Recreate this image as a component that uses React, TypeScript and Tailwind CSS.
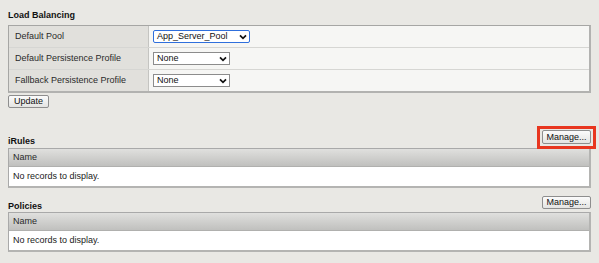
import React from 'react';

const font = { fontFamily: '"Liberation Sans", Arial, Helvetica, sans-serif' };

function Chevron() {
  return (
    <svg width="8" height="6" viewBox="0 0 8 6" className="shrink-0">
      <path d="M1 1.3 L4 4.3 L7 1.3" fill="none" stroke="#111" strokeWidth="1.7" />
    </svg>
  );
}

function FakeSelect({ value, width, focused }: { value: string; width: string; focused?: boolean }) {
  return (
    <div
      className={`flex items-center justify-between h-[13px] pl-[3px] pr-[2px] bg-white text-[9px] leading-none text-[#111] ${width} ${
        focused ? 'border-[1.5px] border-[#2f6fdc] rounded-[2px]' : 'border border-[#8c8c8c]'
      }`}
    >
      <span>{value}</span>
      <Chevron />
    </div>
  );
}

function Btn({ label, w, h }: { label: string; w: string; h: string }) {
  return (
    <button
      className={`${h} ${w} flex items-center justify-center text-[9px] leading-none text-[#111] border border-[#8e8e8e] rounded-[2px] bg-gradient-to-b from-[#fbfbfb] to-[#e4e4e2]`}
    >
      {label}
    </button>
  );
}

function PropRow({ label, children, last }: { label: string; children: React.ReactNode; last?: boolean }) {
  return (
    <div className={`flex ${last ? 'h-[21px]' : 'h-[22px] border-b border-[#d6d6d3]'}`}>
      <div className="w-[140px] bg-[#e1e0dc] border-r border-[#c4c4c1] flex items-center pl-[6px] text-[#2a2a2a]">
        {label}
      </div>
      <div className="flex-1 bg-[#f6f6f4] flex items-center pl-[4px]">{children}</div>
    </div>
  );
}

function EmptyList() {
  return (
    <div className="border border-[#a9a9a9] border-b-2 border-r-2 border-b-[#b4b4b2] border-r-[#b4b4b2]">
      <div className="h-[18px] flex items-center pl-[4px] bg-gradient-to-b from-[#e0e0de] to-[#c0c0be] border-b border-[#b0b0ae] text-[#2a2a2a]">
        Name
      </div>
      <div className="h-[19px] flex items-center pl-[4px] bg-white text-[#1a1a1a]">No records to display.</div>
    </div>
  );
}

export default function App() {
  return (
    <div className="w-[599px] h-[263px] bg-[#e9e8e4] pt-[10px] pl-[8px] pr-[8px] text-[9px] overflow-hidden" style={font}>
      <div className="h-[15px] leading-[11px] font-bold text-[#111]">Load Balancing</div>
      <div className="border border-[#a6a6a4] border-r-2 border-b-2 border-r-[#b2b2b0] border-b-[#b2b2b0]">
        <PropRow label="Default Pool">
          <FakeSelect value="App_Server_Pool" width="w-[97px]" focused />
        </PropRow>
        <PropRow label="Default Persistence Profile">
          <FakeSelect value="None" width="w-[77px]" />
        </PropRow>
        <PropRow label="Fallback Persistence Profile" last>
          <FakeSelect value="None" width="w-[77px]" />
        </PropRow>
      </div>
      <div className="mt-[2px]">
        <Btn label="Update" w="w-[41px]" h="h-[13px]" />
      </div>

      <div className="mt-[22px] flex items-end justify-between">
        <div className="font-bold text-[#111] leading-[11px] mb-[-3px]">iRules</div>
        <div className="relative">
          <Btn label="Manage..." w="w-[49px]" h="h-[14px]" />
          <span className="absolute -left-[5px] -top-[4px] -right-[5px] -bottom-[5px] border-[3px] border-[#e8361f]" />
        </div>
      </div>
      <div className="mt-[4px]">
        <EmptyList />
      </div>

      <div className="mt-[8px] flex items-end justify-between">
        <div className="font-bold text-[#111] leading-[11px] mb-[-3px]">Policies</div>
        <Btn label="Manage..." w="w-[49px]" h="h-[13px]" />
      </div>
      <div className="mt-[3px]">
        <EmptyList />
      </div>
    </div>
  );
}
